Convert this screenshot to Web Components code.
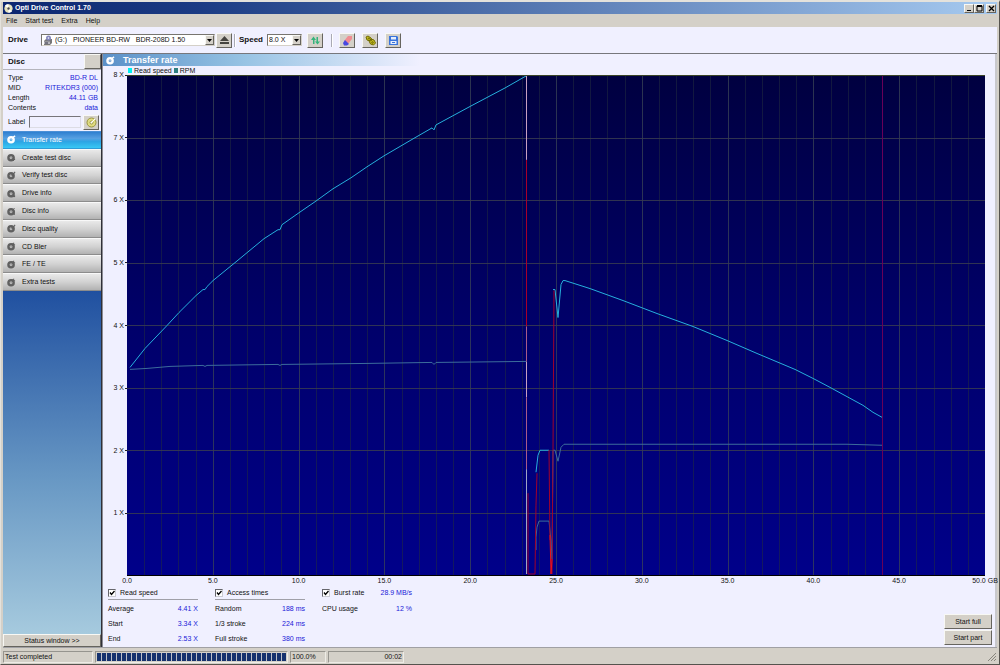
<!DOCTYPE html>
<html lang="en">
<head>
<meta charset="utf-8">
<title>Opti Drive Control 1.70</title>
<style>
html, body { margin: 0; height: 100%; }
body { font: 7px/10px "Liberation Sans", Arial, sans-serif; color: #111; background: #d4d0c8; }
</style>
</head>
<body>
<odc-window></odc-window>
<script>
const define = (name, html, setup) => customElements.define(name, class extends HTMLElement {
  connectedCallback() {
    if (this.shadowRoot) return;
    const root = this.attachShadow({ mode: 'open' });
    const t = document.createElement('template');
    t.innerHTML = typeof html === 'function' ? html(this) : html;
    root.append(t.content.cloneNode(true));
    if (setup) setup(this, root);
  }
});

const BASE = `*{box-sizing:border-box}button,select,input{font:inherit;color:inherit;margin:0}`;
const BEVEL = `background:#d4d0c8;border:1px solid;border-color:#f8f8f4 #66645e #66645e #f8f8f4;`;

const DISC = {
  rate: '<path d="M6 3l3-2" stroke-width="1.5"/>',
  create: '<path d="M7 5v4M5 7h4" stroke-width="1.5"/>',
  verify: '<path d="M5 3l1 2 3-4" stroke-width="1.2"/>',
  drive: '<path d="M4 8h5" stroke-width="2"/>',
  info: '<path d="M8 1v1M8 4v5" stroke-width="1.3"/>',
  extra: '<path d="M5 3l3-2M7 3h2" stroke-width="1.2"/>'
};

define('odc-disc-icon', el => `<style>
:host{display:block;width:9px;height:9px;flex:none}
svg{display:block;width:100%;height:100%}
</style><svg viewBox="0 0 10 10" fill="none" stroke="currentColor" aria-hidden="true">
<circle cx="4.5" cy="5.3" r="2.9" stroke-width="2.7"/><circle cx="4.5" cy="5.3" r=".7" fill="currentColor" stroke="none"/>${DISC[el.getAttribute('kind')] || DISC.rate}</svg>`);

define('odc-title-bar', `<style>${BASE}
:host{display:flex;align-items:center;height:12px;flex:none;padding:0 1px 0 1px;background:linear-gradient(90deg,#0c2670,#1c3c84 20%,#a6caf0);color:#fff}
h1{flex:1;margin:0 0 0 2px;font:bold 7px/12px "Liberation Sans",Arial,sans-serif}
.logo{width:9px;height:9px}
button{${BEVEL}width:10px;height:9px;padding:0;display:grid;place-items:center;color:#000}
button:last-child{margin-left:2px}
button svg{width:7px;height:7px;display:block}
</style>
<svg class="logo" viewBox="0 0 10 10"><circle cx="5" cy="5" r="4.6" fill="#e6e3bd"/><path d="M5 5L1 2A5 5 0 0 1 5 .4zM5 5l4 3a5 5 0 0 1-4 1.6z" fill="#fff"/><circle cx="5" cy="5" r="1.3" fill="#445"/></svg>
<h1>Opti Drive Control 1.70</h1>
<button aria-label="Minimize"><svg viewBox="0 0 7 7"><path d="M1 5.5h4" stroke="#000" stroke-width="1"/></svg></button>
<button aria-label="Maximize"><svg viewBox="0 0 7 7" fill="none" stroke="#000"><path d="M1 1h5v5H1z"/><path d="M1 1h5" stroke-width="2"/></svg></button>
<button aria-label="Close"><svg viewBox="0 0 7 7"><path d="M1 1l5 5M6 1L1 6" stroke="#000" stroke-width="1.3"/></svg></button>`);

define('odc-menu-bar', `<style>${BASE}
:host{display:block;height:13px;flex:none}
nav{display:flex;gap:8px;padding-left:3px}
a{color:inherit;text-decoration:none;line-height:13px}
</style><nav><a href="#file">File</a><a href="#test">Start test</a><a href="#extra">Extra</a><a href="#help">Help</a></nav>`);

define('odc-combo', el => `<style>${BASE}
:host{display:flex;position:relative}
select{appearance:none;width:100%;height:12px;padding:0 12px 0 ${el.hasAttribute('icon') ? 13 : 1}px;border:1px solid;border-color:#77756f #d4d0c8 #d4d0c8 #77756f;border-radius:0;background:#fff;line-height:10px}
.arrow{position:absolute;right:1px;top:1px;width:9px;height:10px;${BEVEL}display:grid;place-items:center;pointer-events:none}
.arrow svg{width:5px;height:3px}
.ico{position:absolute;left:2px;top:1px;width:10px;height:10px}
</style><select aria-label="${el.getAttribute('label')}"><option>${el.getAttribute('value')}</option></select>
${el.hasAttribute('icon') ? '<svg class="ico" viewBox="0 0 10 10"><path d="M1 6l2-2h6v4l-2 2H1z" fill="#777"/><path d="M1 6.5h6V9H1z" fill="#b5b5bd"/><circle cx="5.5" cy="3" r="2.5" fill="#8587bd"/><circle cx="5.5" cy="3" r=".8" fill="#fff"/><path d="M2 8h3" stroke="#334"/></svg>' : ''}
<span class="arrow"><svg viewBox="0 0 5 3"><path d="M0 0h5L2.500 3z" fill="#000"/></svg></span>`);

define('odc-tool-button', el => `<style>${BASE}
:host{display:block;width:16px;height:15px;flex:none}
button{${BEVEL}width:100%;height:100%;padding:0;display:grid;place-items:center}
::slotted(svg){width:11px;height:11px;display:block}
</style><button aria-label="${el.getAttribute('label')}"><slot></slot></button>`);

define('odc-toolbar', `<style>${BASE}
:host{display:flex;align-items:center;height:27px;flex:none;padding:0 5px;background:#f0f0ff;border-bottom:1px solid #77777c}
b{font:bold 8px/10px "Liberation Sans",Arial,sans-serif;width:20px;flex:none}
.wide{width:24px}
.drive{width:174px;margin:0 1px 0 13px}
.speed{width:35px;margin:0 5px 0 4px}
.sep{width:2px;height:13px;border-left:1px solid #aaaab4;border-right:1px solid #fff}
.s1{margin:0 3px 0 2px}.s2{margin:0 6px 0 8px}
.tools{display:flex;gap:7px}
</style>
<b>Drive</b>
<odc-combo class="drive" icon label="Drive" value="(G:)&nbsp;&nbsp; PIONEER BD-RW&nbsp;&nbsp; BDR-208D 1.50"></odc-combo>
<odc-tool-button label="Eject"><svg viewBox="0 0 11 11"><path d="M5.500 1L10 6H1zM1 7h9v2H1z" fill="#45443f"/></svg></odc-tool-button>
<span class="sep s1"></span>
<b class="wide">Speed</b>
<odc-combo class="speed" label="Speed" value="8.0 X"></odc-combo>
<odc-tool-button label="Refresh"><svg viewBox="0 0 11 11"><path d="M3.500 1.500L6 5H4.500v4H3V5H1zM7.500 9.500L5 6.500h1.500V2H8v4.500h2z" fill="#35b47c"/></svg></odc-tool-button>
<span class="sep s2"></span>
<div class="tools">
<odc-tool-button label="Erase"><svg viewBox="0 0 11 11"><path d="M6 1h4v3L6 9 2 6z" fill="#f08c92"/><path d="M3 5l4 4-2 1.500H2L1 8z" fill="#4848e0"/></svg></odc-tool-button>
<odc-tool-button label="Options"><svg viewBox="0 0 11 11" fill="none" stroke="#716c00" stroke-width="1"><path d="M1 2l2-1 3 2 1 2-2 1-3-1zM4 6l2-2 3 1 1.500 3-2 2-3-1z" fill="#c6bd22"/><circle cx="4" cy="3.500" r=".7"/><circle cx="7.500" cy="7.500" r=".8"/></svg></odc-tool-button>
<odc-tool-button label="Save"><svg viewBox="0 0 11 11"><path d="M1 1h8l1 1v8H1z" fill="#3a74dc"/><path d="M3 2h5v2.500H3zM2.500 6h6v3h-6z" fill="#e6eefc"/><path d="M4 7.500h3" stroke="#3a74dc"/></svg></odc-tool-button>
</div>`);

define('odc-disc-panel', `<style>${BASE}
:host{display:block;background:#f0f0ff;flex:none}
header{display:flex;align-items:center;justify-content:space-between;height:16px;padding-left:5px;border-bottom:1px solid #b4b4bc}
h2{margin:0;font:bold 8px/10px "Liberation Sans",Arial,sans-serif}
header button{${BEVEL}width:17px;height:15px;padding:0}
dl{display:grid;grid-template-columns:auto 1fr;margin:0;padding:3px 3px 0 5px;line-height:10px;grid-auto-rows:10px}
dt,dd{margin:0}
dd{text-align:right;color:#2020d8}
form{display:flex;align-items:center;height:18px;padding:0 2px 0 5px}
label{width:21px}
input{width:52px;height:12px;border:1px solid;border-color:#77757a #dcdce4 #dcdce4 #77757a;background:#f0f0ff;padding:0 2px}
odc-tool-button{margin-left:auto}
</style>
<header><h2>Disc</h2><button aria-label="Disc menu"></button></header>
<dl><dt>Type</dt><dd>BD-R DL</dd><dt>MID</dt><dd>RITEKDR3 (000)</dd><dt>Length</dt><dd>44.11 GB</dd><dt>Contents</dt><dd>data</dd></dl>
<form><label for="lbl">Label</label><input id="lbl" type="text">
<odc-tool-button label="Write label"><svg viewBox="0 0 11 11"><circle cx="5.500" cy="5.500" r="4.500" fill="#e0dc80" stroke="#9a9540"/><circle cx="5.500" cy="5.500" r="1.500" fill="#fff" stroke="#9a9540"/><path d="M5.500 5.500L9 2" stroke="#fff"/></svg></odc-tool-button></form>`);

define('odc-nav-item', el => `<style>${BASE}
:host{display:flex;flex:1;min-height:0}
button{flex:1;display:flex;align-items:center;gap:6px;padding:0 0 0 4px;border:0;border-bottom:1px solid #8c8c8c;border-top:1px solid #f8f8f8;background:linear-gradient(#e9e9e9,#d2d2d2 50%,#b2b2b2);text-align:left}
odc-disc-icon{color:#606060}
:host([active]) button{background:linear-gradient(#2f7fd0,#57a0e2 40%,#2da4e4 60%,#38c8f4);color:#fff;border-color:#4a8fd6 #4a8fd6 #2f9cd8}
:host([active]) odc-disc-icon{color:#fff}
</style><button><odc-disc-icon kind="${el.getAttribute('kind')}"></odc-disc-icon><span><slot></slot></span></button>`);

define('odc-sidebar', `<style>${BASE}
:host{display:flex;flex-direction:column;width:99px;flex:none;border-right:1px solid #303038;background:#f0f0ff}
nav{display:flex;flex-direction:column;height:160px;flex:none}
.fill{flex:1;background:linear-gradient(#2050a0,#6898c4 55%,#a6cade)}
.status{${BEVEL}height:13px;padding:0;line-height:11px;flex:none}
</style>
<odc-disc-panel></odc-disc-panel>
<nav>
<odc-nav-item active kind="rate">Transfer rate</odc-nav-item>
<odc-nav-item kind="create">Create test disc</odc-nav-item>
<odc-nav-item kind="verify">Verify test disc</odc-nav-item>
<odc-nav-item kind="drive">Drive info</odc-nav-item>
<odc-nav-item kind="info">Disc info</odc-nav-item>
<odc-nav-item kind="verify">Disc quality</odc-nav-item>
<odc-nav-item kind="extra">CD Bler</odc-nav-item>
<odc-nav-item kind="extra">FE / TE</odc-nav-item>
<odc-nav-item kind="extra">Extra tests</odc-nav-item>
</nav>
<div class="fill"></div>
<button class="status">Status window &gt;&gt;</button>`);

define('odc-chart', () => {
  const W = 858, H = 500;
  let minor = '', major = '', rows = '', ys = '', xs = '';
  for (let i = 1; i < 50; i++) {
    const d = `M${Math.round(i * W / 50)} 0V${H}`;
    if (i % 5) minor += d; else major += d;
  }
  for (let i = 1; i < 8; i++) rows += `M0 ${Math.round(i * H / 8)}H${W}`;
  for (let i = 8; i > 0; i--) ys += `<span>${i} X</span>`;
  for (let i = 0; i <= 50; i += 5) xs += `<span>${i.toFixed(1)}${i === 50 ? ' GB' : ''}</span>`;
  return `<style>${BASE}
:host{display:grid;flex:1;min-height:0;grid-template:9px 1fr 10px / 24px 1fr 10px}
.legend{grid-area:1/2;display:flex;align-items:center;gap:2px;line-height:9px;padding-left:1px}
.legend i{width:4px;height:5px;background:#00f0f0}
.legend i+span+i{background:#2f7f7f}
.y{grid-area:2/1;display:grid;grid-template-rows:repeat(8,1fr);text-align:right}
.y span{height:0;display:flex;align-items:center;justify-content:flex-end;white-space:pre}
.y span::after{content:"";width:2px;height:1px;background:#222;margin-left:1px}
.x{grid-area:3/2;display:flex;justify-content:space-between}
.x span{width:0;display:flex;justify-content:center;white-space:nowrap}
svg{grid-area:2/2;display:block;width:100%;height:100%;min-height:0;background:linear-gradient(#000040,#00006a 50%,#00008a);border-top:1px solid #3a4426;border-bottom:1px solid #000}
path{fill:none;vector-effect:non-scaling-stroke}
</style>
<div class="legend"><i></i><span>Read speed</span><i></i><span>RPM</span></div>
<div class="y">${ys}</div>
<svg viewBox="0 0 ${W} ${H}" preserveAspectRatio="none" role="img" aria-label="Read speed and RPM by position">
<g shape-rendering="crispEdges"><path d="${minor}" stroke="#202c40" stroke-opacity=".55"/><path d="${major}" stroke="#3a4456" stroke-opacity=".75"/><path d="${rows}" stroke="#383c50" stroke-opacity=".85"/>
<path d="M755 0V500" stroke="#680058"/></g>
<path stroke="#3c6c9c" d="M3 294L20 293 43 291 76 290 78 291 80 290 151 289 153 290 155 289 240 288 305 287 307 289 309 287 399 286M409 475L409 462 410 452 412 446H422L424 465 425 484 426 375H428L431 386 434 372 437 369H720L755 370"/>
<path stroke="#26b0dc" d="M3 292L18 273 40 250 52 237 69 220 76 214 78 214 80 211 86 205 108 187 137 163 151 154 153 154 155 149 172 137 188 126 206 113 224 102 240 91 257 80 286 63 305 52 307 54 309 49 344 30 378 12 399 0M409 397L411 380 413 375H422M426 214H428L431 242 434 209 436 205 438 205 463 213 496 225 530 238 566 251 600 265 630 278 668 294 686 303 703 312 736 330 746 337 755 342"/>
<g fill="none">
<path stroke="#a80028" d="M399.500 84V251"/><path stroke="#c8a0c0" d="M399.500 0V84M399.500 286V322"/><path stroke="#a85c88" d="M399.500 251V286M399.500 322V394"/><path stroke="#a0a4c4" d="M399.500 394V499"/>
</g>
<path stroke="#a0002c" d="M401 418V499H408L409 430 410 398M422 375L423 465M425 499L426 375 427 215"/>
<path stroke="#f01018" d="M423 460L424 499 425 484"/>
</svg>
<div class="x">${xs}</div>`;
});

define('odc-stats', el => {
  const rows = JSON.parse(el.getAttribute('rows'));
  return `<style>${BASE}
:host{display:block}
.head{display:flex;align-items:center;height:14px;border-bottom:1px solid transparent}
:host([ruled]) .head{border-color:#a0a0a8}
input{appearance:none;width:8px;height:8px;margin:0 4px 0 0;border:1px solid;border-color:#66666c #ccccd4 #ccccd4 #66666c;background:#fff url("data:image/svg+xml,%3Csvg xmlns='http://www.w3.org/2000/svg' viewBox='0 0 6 6'%3E%3Cpath d='M1 2.500l1.500 2L5.500 1' fill='none' stroke='%23000' stroke-width='1.300'/%3E%3C/svg%3E") center/6px no-repeat}
.head span{margin-left:auto;color:#2020d8}
table{width:100%;border-collapse:collapse;margin-top:1px}
th,td{padding:0;height:15px;font-weight:normal;text-align:left}
td{text-align:right;color:#2020d8}
</style>
<div class="head"><input type="checkbox" id="c" checked><label for="c">${el.getAttribute('heading')}</label>${el.hasAttribute('value') ? `<span>${el.getAttribute('value')}</span>` : ''}</div>
<table>${rows.map(r => `<tr><th scope="row">${r[0]}</th><td>${r[1]}</td></tr>`).join('')}</table>`;
});

define('odc-transfer-view', `<style>${BASE}
:host{display:flex;flex-direction:column;flex:1;min-width:0;background:#f0f0ff;border-left:1px solid #8c8c94;border-right:2px solid #c8c8cc}
h2{display:flex;align-items:center;gap:8px;height:12px;margin:0;padding-left:3px;flex:none;color:#fff;font:bold 9px/12px "Liberation Sans",Arial,sans-serif;width:317px;background:linear-gradient(90deg,#5a90c8,#98c4e4 45%,#f0f0ff)}
.bottom{display:flex;align-items:flex-start;gap:17px;padding:0 3px 0 5px;height:61px;flex:none}
odc-stats{width:90px}
.actions{margin:28px 0 0 auto;display:flex;flex-direction:column;gap:1px}
.actions button{${BEVEL}width:48px;height:15px;padding:0}
</style>
<h2><odc-disc-icon kind="rate"></odc-disc-icon>Transfer rate</h2>
<odc-chart></odc-chart>
<div class="bottom">
<odc-stats ruled heading="Read speed" rows='[["Average","4.41 X"],["Start","3.34 X"],["End","2.53 X"]]'></odc-stats>
<odc-stats ruled heading="Access times" rows='[["Random","188 ms"],["1/3 stroke","224 ms"],["Full stroke","380 ms"]]'></odc-stats>
<odc-stats heading="Burst rate" value="28.9 MB/s" rows='[["CPU usage","12 %"]]'></odc-stats>
<div class="actions"><button>Start full</button><button>Start part</button></div>
</div>`);

define('odc-status-bar', `<style>${BASE}
:host{display:flex;box-sizing:border-box;gap:2px;height:17px;flex:none;padding:3px 0 1px;align-items:stretch;border-top:1px solid #a0a0a4}
div{border:1px solid;border-color:#96948e #eeece6 #eeece6 #96948e;line-height:10px;padding:0 1px}
.msg{width:90px}
.bar{width:193px;padding:1px}
.bar i{display:block;height:100%;background:repeating-linear-gradient(90deg,#16326e 0 4px,#c0c2c8 4px 5px)}
.pct{width:36px}
.time{width:76px;text-align:right}
.rest{flex:1;border-color:transparent;display:flex;justify-content:flex-end;padding:0}
svg{width:9px;height:9px}
</style>
<div class="msg">Test completed</div>
<div class="bar" role="progressbar" aria-valuenow="100"><i></i></div>
<div class="pct">100.0%</div>
<div class="time">00:02</div>
<div class="rest"><svg viewBox="0 0 9 9" stroke="#88867e"><path d="M1 9l8-8M4 9l5-5M7 9l2-2"/></svg></div>`);

define('odc-window', `<style>${BASE}
:host{display:flex;flex-direction:column;box-sizing:border-box;height:100vh;min-height:420px;padding:0 2px;border:1px solid #e4e2dc;border-top-width:2px;border-bottom-color:#55534e;border-right-color:#55534e;background:#d4d0c8}
main{display:flex;flex:1;min-height:0}
</style>
<odc-title-bar></odc-title-bar>
<odc-menu-bar></odc-menu-bar>
<odc-toolbar></odc-toolbar>
<main><odc-sidebar></odc-sidebar><odc-transfer-view></odc-transfer-view></main>
<odc-status-bar></odc-status-bar>`);
</script>
</body>
</html>
